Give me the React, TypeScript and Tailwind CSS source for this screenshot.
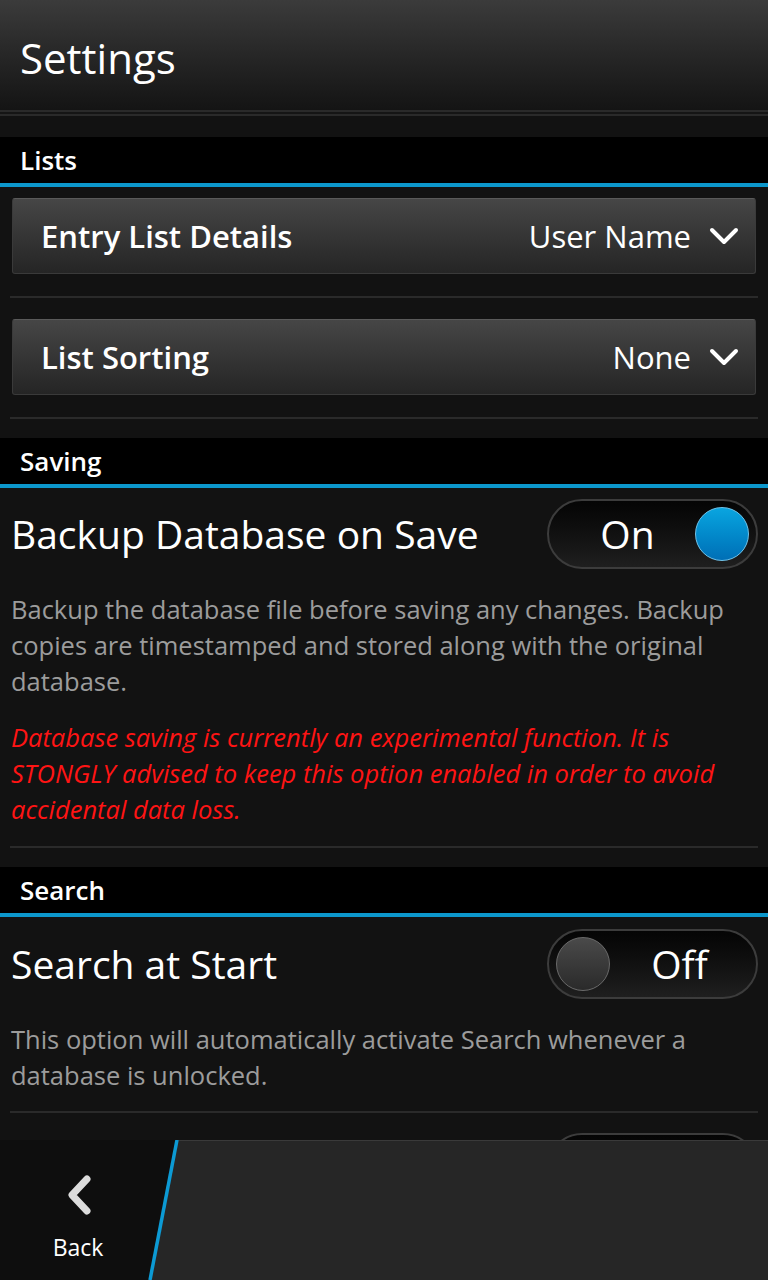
import React from 'react';

const font = { fontFamily: '"Open Sans", Lato, sans-serif' };

function SectionHeader({ title }: { title: string }) {
  return (
    <div>
      <div className="h-[46px] bg-black flex items-center pl-[20px] text-[26px] font-semibold text-white">{title}</div>
      <div className="h-[4px] bg-[#0c97cc]" />
    </div>
  );
}

function Separator() {
  return <div className="h-[2px] mx-[10px] bg-[#2a2a2a]" />;
}

function Chevron() {
  return (
    <svg width="30" height="20" viewBox="0 0 30 20" className="shrink-0">
      <path d="M3 4 L15 16 L27 4" fill="none" stroke="white" strokeWidth="4" strokeLinecap="round" strokeLinejoin="round" />
    </svg>
  );
}

function DropDown({ label, value }: { label: string; value: string }) {
  return (
    <div className="h-[76px] rounded-[3px] border border-[#3a3a3a] border-t-[#5a5a5a] bg-gradient-to-b from-[#464646] to-[#252525] flex items-center pl-[28px] pr-[16px]">
      <span className="text-[31px] font-semibold text-white flex-1">{label}</span>
      <span className="text-[31px] text-white mr-[18px]">{value}</span>
      <Chevron />
    </div>
  );
}

function ToggleShell({ children }: { children?: React.ReactNode }) {
  return (
    <div className="w-[211px] h-[70px] rounded-full border-2 border-[#3c3c3c] bg-gradient-to-b from-[#050505] to-[#1f1f1f] flex items-center px-[7px] shrink-0">
      {children}
    </div>
  );
}

function Toggle({ on }: { on: boolean }) {
  return (
    <ToggleShell>
      {on ? (
        <>
          <span className="flex-1 text-center text-[39px] text-white pl-[4px]">On</span>
          <div className="w-[54px] h-[54px] rounded-full border border-[#6fc3ea] bg-gradient-to-b from-[#0aa5e0] to-[#006fb6]" />
        </>
      ) : (
        <>
          <div className="w-[54px] h-[54px] rounded-full border border-[#6a6a6a] bg-gradient-to-b from-[#4a4a4a] to-[#2a2a2a]" />
          <span className="flex-1 text-center text-[39px] text-white">Off</span>
        </>
      )}
    </ToggleShell>
  );
}

function ToggleRow({ title, on }: { title: string; on: boolean }) {
  return (
    <div className="flex items-center justify-between pl-[11px] pr-[10px]">
      <span className="text-[39px] text-white">{title}</span>
      <Toggle on={on} />
    </div>
  );
}

export default function App() {
  return (
    <div className="w-full h-[1280px] bg-[#121212] flex flex-col overflow-hidden" style={font}>
      <header className="h-[110px] shrink-0 bg-gradient-to-b from-[#3b3b3b] to-[#141414] flex items-center pl-[20px]">
        <h1 className="text-[42px] text-white mt-[4px]">Settings</h1>
      </header>
      <div className="h-[2px] bg-[#2a2a2a]" />
      <div className="h-[2px] bg-[#151515]" />
      <div className="h-[2px] bg-[#2a2a2a]" />

      <main className="flex-1 overflow-hidden pt-[21px]">
        <SectionHeader title="Lists" />
        <div className="px-[12px] pt-[11px]">
          <DropDown label="Entry List Details" value="User Name" />
        </div>
        <div className="mt-[22px]"><Separator /></div>
        <div className="px-[12px] pt-[21px]">
          <DropDown label="List Sorting" value="None" />
        </div>
        <div className="mt-[22px]"><Separator /></div>

        <div className="mt-[19px]"><SectionHeader title="Saving" /></div>
        <div className="pt-[11px]">
          <ToggleRow title="Backup Database on Save" on={true} />
        </div>
        <p className="mt-[22px] px-[11px] text-[25.5px] leading-[36px] text-[#9c9c9c]">
          Backup the database file before saving any changes. Backup copies are timestamped and stored along with the original database.
        </p>
        <p className="mt-[20px] px-[11px] text-[25.5px] leading-[36px] text-[#ff1414] italic">
          Database saving is currently an experimental function. It is STONGLY advised to keep this option enabled in order to avoid accidental data loss.
        </p>
        <div className="mt-[19px]"><Separator /></div>

        <div className="mt-[19px]"><SectionHeader title="Search" /></div>
        <div className="pt-[12px]">
          <ToggleRow title="Search at Start" on={false} />
        </div>
        <p className="mt-[22px] px-[11px] text-[25.5px] leading-[36px] text-[#9c9c9c]">
          This option will automatically activate Search whenever a database is unlocked.
        </p>
        <div className="mt-[18px]"><Separator /></div>
        <div className="pt-[20px] flex justify-end pr-[10px]">
          <ToggleShell />
        </div>
      </main>

      <footer className="h-[140px] shrink-0 relative bg-[#0e0e0e]">
        <svg className="absolute inset-0" width="768" height="140" viewBox="0 0 768 140">
          <polygon points="177,0 768,0 768,140 150,140" fill="#262626" />
          <line x1="177" y1="0" x2="768" y2="0" stroke="#3a3a3a" strokeWidth="2" />
          <line x1="177" y1="0" x2="150" y2="140" stroke="#0c9ad4" strokeWidth="3.5" />
        </svg>
        <div className="relative w-[156px] h-full flex flex-col items-center pt-[34px]">
          <svg width="30" height="42" viewBox="0 0 30 42">
            <path d="M24 5 L9 21 L24 37" fill="none" stroke="#dcdcdc" strokeWidth="7" strokeLinecap="round" strokeLinejoin="round" />
          </svg>
          <span className="mt-[20px] text-[23px] text-white leading-none">Back</span>
        </div>
      </footer>
    </div>
  );
}
